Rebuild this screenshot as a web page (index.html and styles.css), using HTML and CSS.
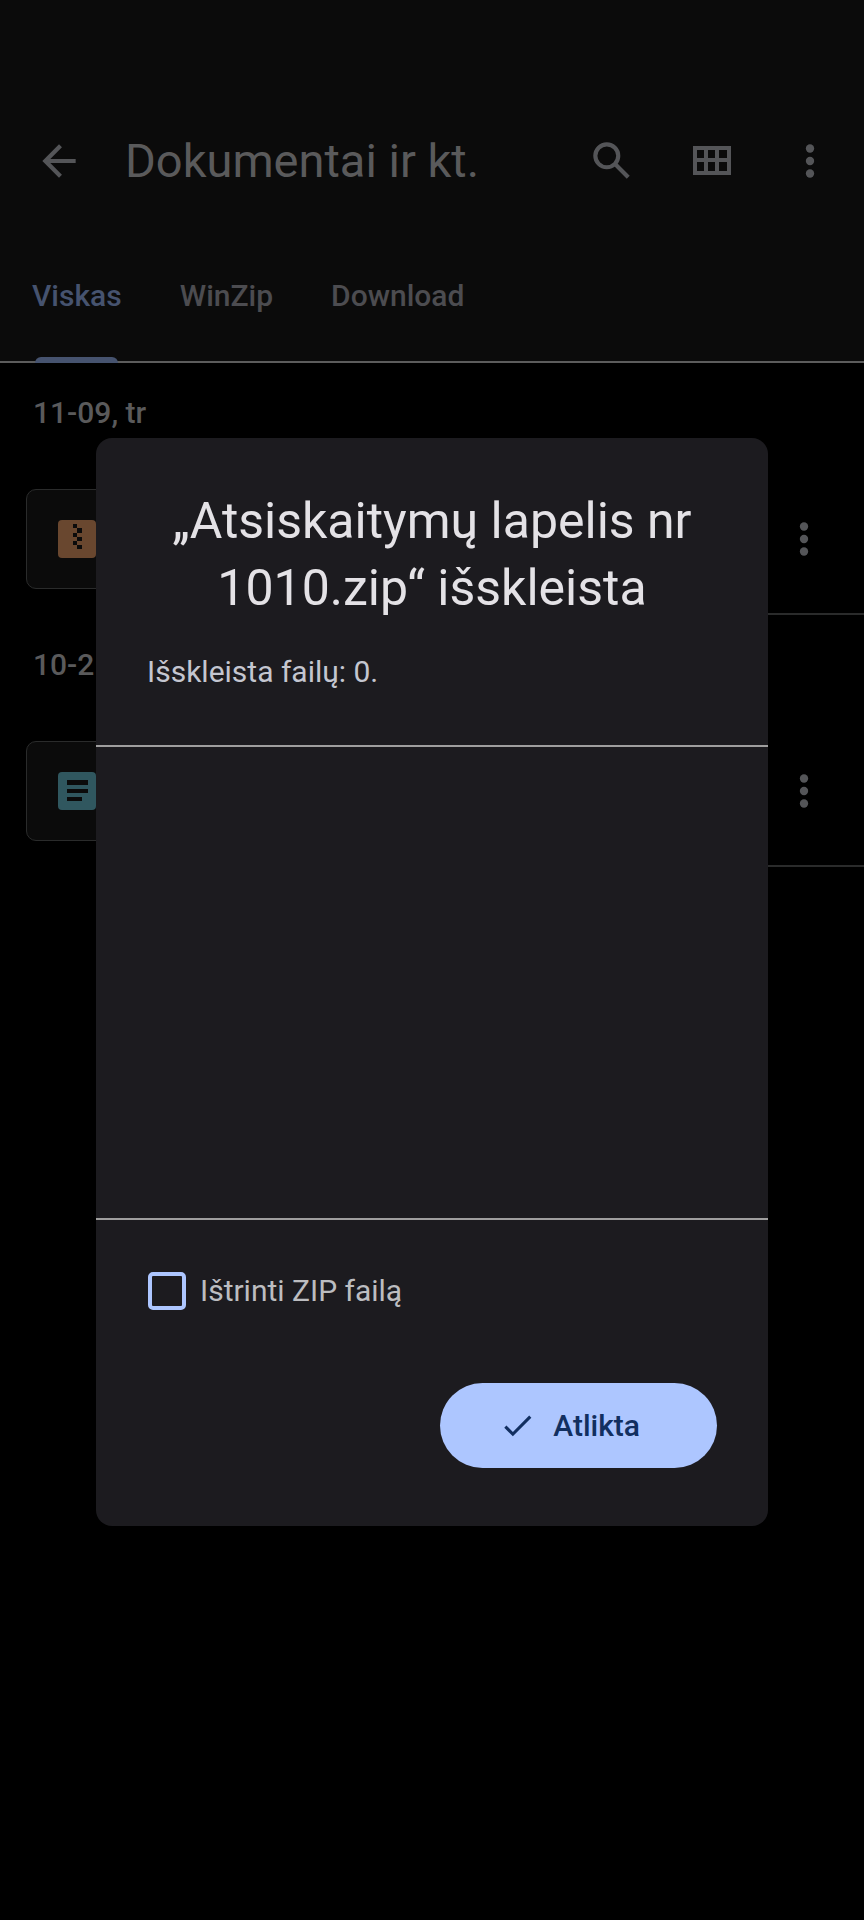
FILE: index.html
```html
<!DOCTYPE html>
<html lang="lt">
<head>
<meta charset="utf-8">
<meta name="viewport" content="width=device-width, initial-scale=1">
<title>Dokumentai ir kt.</title>
<link rel="stylesheet" href="styles.css">
</head>
<body>
<div class="app">
  <header class="header">
    <div class="toolbar">
      <button class="icon-button back" type="button" aria-label="Atgal">
        <svg class="icon" viewBox="0 0 24 24"><path d="M20 11H7.830l5.590-5.590L12 4l-8 8 8 8 1.410-1.410L7.830 13H20z"/></svg>
      </button>
      <h1 class="page-title">Dokumentai ir kt.</h1>
      <button class="icon-button" type="button" aria-label="Ieškoti">
        <svg class="icon" viewBox="0 0 24 24"><path fill="none" stroke="currentColor" stroke-width="2" d="M15 9.500a5.500 5.500 0 1 1-11 0a5.500 5.500 0 0 1 11 0zM13.700 13.700l6.100 6.100"/></svg>
      </button>
      <button class="icon-button" type="button" aria-label="Tinklelio rodinys">
        <svg class="icon" viewBox="0 0 50 50"><path fill-rule="evenodd" d="M6 10h38v29H6zM10 14v8h7v-8zM21 14v8h7v-8zM32 14v8h8v-8zM10 26v9h7v-9zM21 26v9h7v-9zM32 26v9h8v-9z"/></svg>
      </button>
      <button class="icon-button more" type="button" aria-label="Daugiau">
        <svg class="icon" viewBox="0 0 24 24"><circle cx="12" cy="6" r="2"/><circle cx="12" cy="12" r="2"/><circle cx="12" cy="18" r="2"/></svg>
      </button>
    </div>
    <nav class="tabs">
      <a class="tab active" href="#viskas">Viskas</a>
      <a class="tab" href="#winzip">WinZip</a>
      <a class="tab" href="#download">Download</a>
    </nav>
  </header>
  <main>
    <section>
      <h2 class="date">11-09, tr</h2>
      <div class="file">
        <div class="thumb">
          <svg class="file-icon zip" viewBox="0 0 38 38"><rect width="38" height="38" rx="4"/><path class="cut" d="M15 4h4v4h-4zM19 8h5v5h-5zM15 13h4v4h-4zM19 17h5v4h-5zM15 21h4v4h-4zM19 25h5v4h-5z"/></svg>
        </div>
        <div class="file-body">
          <button class="icon-button" type="button" aria-label="Failo meniu">
            <svg class="icon" viewBox="0 0 24 24"><circle cx="12" cy="6" r="2"/><circle cx="12" cy="12" r="2"/><circle cx="12" cy="18" r="2"/></svg>
          </button>
        </div>
      </div>
    </section>
    <section>
      <h2 class="date">10-2</h2>
      <div class="file">
        <div class="thumb">
          <svg class="file-icon doc" viewBox="0 0 38 38"><rect width="38" height="38" rx="4"/><path class="cut" d="M9 8h21v5H9zM9 17h21v4H9zM9 25h15v4H9z"/></svg>
        </div>
        <div class="file-body">
          <button class="icon-button" type="button" aria-label="Failo meniu">
            <svg class="icon" viewBox="0 0 24 24"><circle cx="12" cy="6" r="2"/><circle cx="12" cy="12" r="2"/><circle cx="12" cy="18" r="2"/></svg>
          </button>
        </div>
      </div>
    </section>
  </main>
</div>
<div class="overlay">
  <div class="dialog" role="dialog" aria-modal="true" aria-labelledby="dialog-title">
    <div class="dialog-head">
      <h2 class="dialog-title" id="dialog-title">„Atsiskaitymų lapelis nr 1010.zip“ išskleista</h2>
      <p class="dialog-text">Išskleista failų: 0.</p>
    </div>
    <div class="file-list"></div>
    <div class="dialog-foot">
      <label class="check"><input class="check-box" type="checkbox">Ištrinti ZIP failą</label>
      <button class="done" type="button">
        <svg class="done-icon" viewBox="0 0 24 24"><path d="M9 16.170L4.830 12l-1.420 1.410L9 19 21 7l-1.410-1.410z"/></svg>
        Atlikta
      </button>
    </div>
  </div>
</div>
</body>
</html>
```
FILE: styles.css
```css
* {
  box-sizing: border-box;
}

body {
  margin: 0;
  min-height: 100vh;
  background: #000;
  color: #5a5a5b;
  font-family: Roboto, "Noto Sans", sans-serif;
}

h1,
h2,
p {
  margin: 0;
  font-weight: 400;
}

button {
  border: 0;
  padding: 0;
  background: none;
  color: inherit;
  font: inherit;
}

.header {
  background: #0b0b0b;
  border-bottom: 2px solid #5c5c5c;
}

.toolbar {
  display: flex;
  align-items: center;
  padding: 102px 6px 0 9px;
  height: 220px;
}

.icon-button {
  flex: none;
  display: flex;
  align-items: center;
  justify-content: center;
  width: 100px;
  height: 100px;
  color: #545558;
}

.back {
  margin-right: 16px;
}

.more {
  width: 96px;
}

.icon {
  width: 50px;
  height: 50px;
  fill: currentColor;
}

.page-title {
  flex: 1;
  font-size: 47px;
  line-height: 60px;
}

.tabs {
  display: flex;
  gap: 58px;
  padding: 0 32px;
  height: 141px;
}

.tab {
  position: relative;
  padding-top: 58px;
  color: #4c4c50;
  font-size: 30px;
  font-weight: 500;
  line-height: 36px;
  text-decoration: none;
}

.active {
  color: #46536f;
}

.active::after {
  content: "";
  position: absolute;
  right: 4px;
  bottom: -2px;
  left: 3px;
  height: 6px;
  border-radius: 6px 6px 0 0;
  background: #46536f;
}

.date {
  padding: 32px 33px;
  font-size: 30px;
  font-weight: 500;
  line-height: 36px;
}

.file {
  display: flex;
  padding-left: 26px;
}

.thumb {
  display: flex;
  align-items: center;
  justify-content: center;
  margin: 26px 0;
  width: 101px;
  height: 100px;
  border: 1px solid #2a2b2b;
  border-radius: 10px;
  background: #0b0b0b;
}

.file-body {
  flex: 1;
  display: flex;
  align-items: center;
  justify-content: flex-end;
  margin-left: 26px;
  padding: 2px 10px 0 0;
  border-bottom: 2px solid #2a2b2b;
}

.file-icon {
  width: 38px;
  height: 38px;
}

.zip {
  fill: #69472f;
}

.doc {
  fill: #30575f;
}

.cut {
  fill: #0b0b0b;
}

.overlay {
  position: fixed;
  inset: 0;
  display: flex;
  align-items: center;
  justify-content: center;
  padding: 44px 96px 0;
}

.dialog {
  flex: 1;
  border-radius: 16px;
  background: #1c1b1f;
}

.dialog-head {
  padding: 50px 51px 55px;
}

.dialog-title {
  color: #e4e2e6;
  font-size: 50px;
  line-height: 67px;
  text-align: center;
}

.dialog-text {
  margin-top: 31px;
  color: #c4c6d0;
  font-size: 30px;
  line-height: 37px;
}

.file-list {
  height: 475px;
  border-top: 2px solid #9f9e9e;
  border-bottom: 2px solid #9f9e9e;
}

.dialog-foot {
  display: flex;
  flex-direction: column;
  padding: 52px 51px 58px;
}

.check {
  display: flex;
  align-items: center;
  gap: 14px;
  color: #bcbdc0;
  font-size: 30px;
  line-height: 38px;
}

.check-box {
  appearance: none;
  margin: 0 0 0 1px;
  width: 38px;
  height: 38px;
  border: 4px solid #adc6ff;
  border-radius: 5px;
}

.done {
  display: flex;
  align-items: center;
  align-self: flex-end;
  gap: 17px;
  margin-top: 73px;
  padding: 0 77px 0 59px;
  height: 85px;
  border-radius: 43px;
  background: #adc6ff;
  color: #122f60;
  font-size: 30px;
  font-weight: 500;
}

.done-icon {
  width: 37px;
  height: 37px;
  fill: currentColor;
}
```
